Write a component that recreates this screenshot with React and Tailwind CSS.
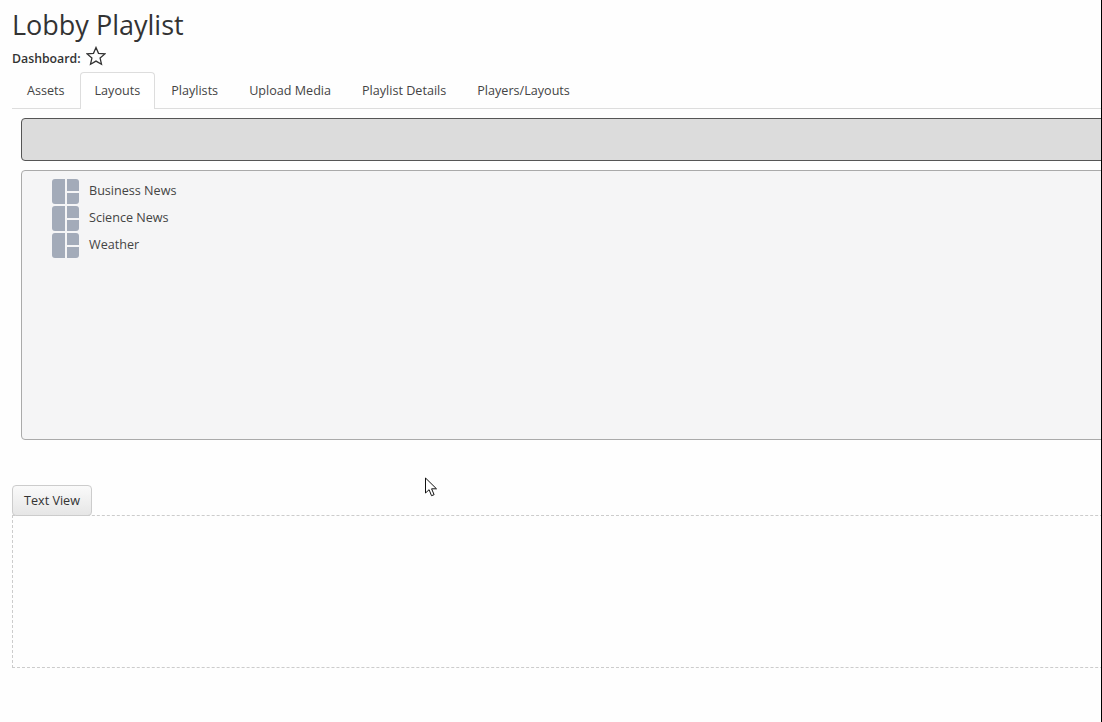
import React from "react";

const tabs = ["Assets", "Layouts", "Playlists", "Upload Media", "Playlist Details", "Players/Layouts"];
const layouts = ["Business News", "Science News", "Weather"];

function LayoutIcon() {
  return (
    <svg className="shrink-0" width="27" height="25" viewBox="0 0 27 25" fill="#a3abb9" aria-hidden>
      <path d="M3 0h10v25H3a3 3 0 0 1-3-3V3a3 3 0 0 1 3-3z" />
      <path d="M15 0h9a3 3 0 0 1 3 3v9H15z" />
      <path d="M15 14h12v8a3 3 0 0 1-3 3h-9z" />
    </svg>
  );
}

function StarIcon() {
  return (
    <svg width="20" height="20" viewBox="0 0 20 20" fill="none" stroke="#333" strokeWidth="1.3" strokeLinejoin="miter" aria-hidden>
      <path d="M10 1.5l2.5 5.8 6.4.6-4.8 4.2 1.4 6.2L10 15.1l-5.5 3.2 1.4-6.2L1.1 7.9l6.4-.6z" />
    </svg>
  );
}

function Cursor() {
  return (
    <svg className="absolute left-[424px] top-[477px]" width="14" height="21" viewBox="0 0 14 21" aria-hidden>
      <path d="M1.5 1v15l3.6-3.3 2.4 6 2.6-1-2.5-5.9h4.9z" fill="#fff" stroke="#111" strokeWidth="1" />
    </svg>
  );
}

export default function App() {
  return (
    <div className="relative h-[722px] w-[1102px] overflow-hidden bg-[#fefefe] font-['Open_Sans',sans-serif] text-[#333]">
      <div className="w-[1200px] px-3">
        <h1 className="h-[45px] pt-[5px] text-[27px] leading-[40px] text-[#333]">Lobby Playlist</h1>
        <div className="flex h-[27px] items-start gap-[5px] text-[12.3px] font-semibold">
          <span className="pt-[5px]">Dashboard:</span>
          <span className="mt-[1px]"><StarIcon /></span>
        </div>
        <div className="flex h-[37px] gap-px border-b border-[#ddd] text-[12.6px] text-[#444]">
          {tabs.map((t) => (
            <div
              key={t}
              className={
                t === "Layouts"
                  ? "-mb-px -ml-px flex h-[37px] items-center rounded-t border border-b-0 border-[#ddd] bg-white px-[14px]"
                  : "flex items-center px-[15px] pt-[2px]"
              }
            >
              {t}
            </div>
          ))}
        </div>
        <div className="ml-[9px] mt-[9px] h-[43px] rounded border border-[#555] bg-[#dcdcdc]" />
        <div className="ml-[9px] mt-[9px] h-[270px] rounded border border-[#aaa] bg-[#f5f5f6] pl-[30px] pt-[7px] text-[12.6px] text-[#444]">
          {layouts.map((l) => (
            <div key={l} className="flex h-[27px] items-center gap-[10px]">
              <LayoutIcon />
              <span className="pb-[1px]">{l}</span>
            </div>
          ))}
        </div>
        <button className="mt-[45px] block h-[31px] w-[80px] rounded border border-[#ccc] bg-gradient-to-b from-[#fafafa] to-[#e6e6e6] pt-[2px] text-[12.6px] text-[#333]">
          Text View
        </button>
        <div className="-mt-px h-[153px] border border-dashed border-[#ccc]" />
      </div>
      <Cursor />
      <div className="absolute inset-y-0 right-0 w-px bg-black" />
    </div>
  );
}
